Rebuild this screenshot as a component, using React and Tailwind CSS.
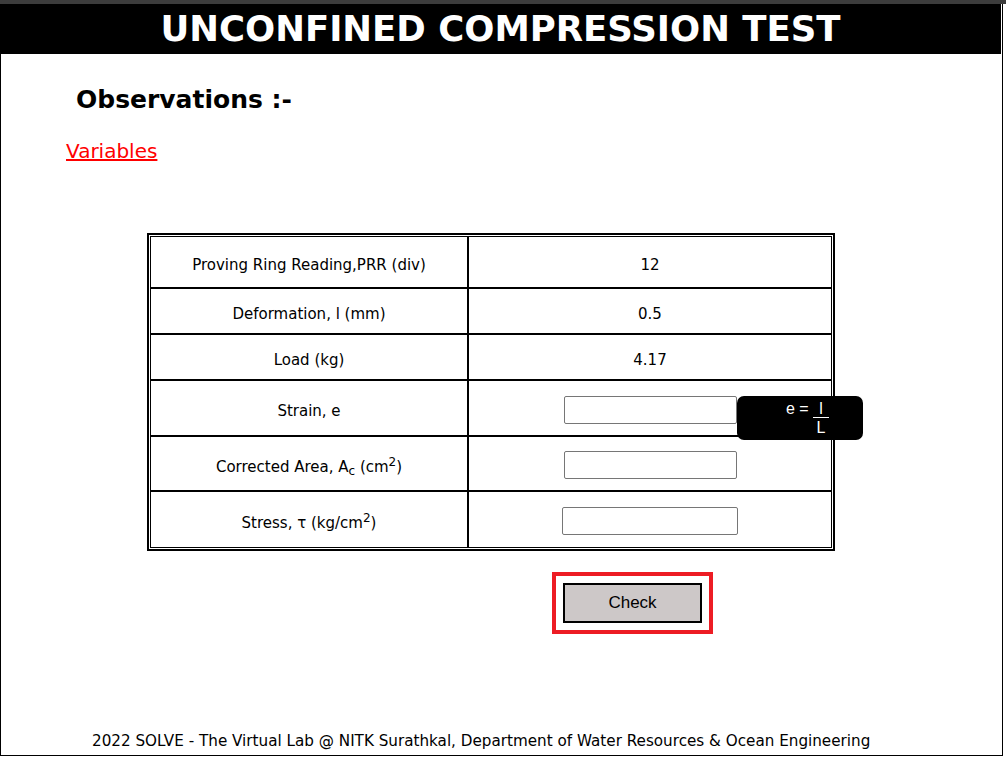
import React from 'react';

const rows = [
    { label: 'Proving Ring Reading,PRR (div)', value: '12', h: 'h-[52px]' },
    { label: 'Deformation, l (mm)', value: '0.5', h: 'h-[46px]' },
    { label: 'Load (kg)', value: '4.17', h: 'h-[46px]' },
];

const Tip = () => (
    <div className="absolute left-[268px] top-[15px] w-[126px] h-[44px] bg-black rounded-[7px] text-white z-10 flex items-start pl-[49px] pt-[3px] text-[16px] leading-[14px]" style={{ fontFamily: '"Liberation Sans", Arial, sans-serif' }}>
        <span className="mt-[3px]">e =&nbsp;</span>
        <span className="flex flex-col items-center">
            <span className="border-b border-white px-[6px] pt-[3px] pb-[1px]">l</span>
            <span className="pt-[3px]">L</span>
        </span>
    </div>
);

const Field = ({ w = 'w-[173px]' }) => (
    <input className={`${w} h-[28px] border border-[#767676] rounded-[2px] bg-white px-1`} />
);

export default function App() {
    return (
        <div className="w-[1006px] h-[762px] bg-white overflow-hidden" style={{ fontFamily: '"DejaVu Sans", Verdana, sans-serif' }}>
            <div className="h-[4px] bg-[#3c3c3c]" />
            <div className="w-[1003px] h-[752px] border-x border-b border-black flex flex-col">
                <div className="h-[50px] bg-black mr-[1px] -ml-[1px] flex items-center justify-center">
                    <h1 className="text-white font-bold text-[35.5px] leading-none">UNCONFINED COMPRESSION TEST</h1>
                </div>

                <h2 className="ml-[75px] mt-[31px] text-[25px] font-bold leading-[30px]">Observations :-</h2>
                <a href="#" className="ml-[65px] mt-[24px] self-start text-[#ff0000] underline text-[20px] leading-[24px]">Variables</a>

                <div className="ml-[146px] mt-[70px] w-[688px] border-2 border-black p-[1px]">
                    <div className="grid grid-cols-[318px_1fr] border border-black text-[15px] text-black">
                        {rows.map((r, i) => (
                            <React.Fragment key={i}>
                                <div className={`${r.h} flex items-center justify-center pt-[7px] border-b-2 border-r-2 border-black`}>{r.label}</div>
                                <div className={`${r.h} flex items-center justify-center pt-[7px] border-b-2 border-black`}>{r.value}</div>
                            </React.Fragment>
                        ))}
                        <div className="h-[56px] flex items-center justify-center pt-[7px] border-b-2 border-r-2 border-black">Strain, e</div>
                        <div className="relative h-[56px] flex items-center justify-center pt-[3px] border-b-2 border-black">
                            <Field />
                            <Tip />
                        </div>
                        <div className="h-[55px] flex items-center justify-center pt-[7px] border-b-2 border-r-2 border-black">
                            <span>Corrected Area, A<sub className="text-[12px]">c</sub> (cm<sup className="text-[12px]">2</sup>)</span>
                        </div>
                        <div className="h-[55px] flex items-center justify-center pt-[3px] border-b-2 border-black">
                            <Field />
                        </div>
                        <div className="h-[55px] flex items-center justify-center pt-[7px] border-r-2 border-black">
                            <span>Stress, τ (kg/cm<sup className="text-[12px]">2</sup>)</span>
                        </div>
                        <div className="h-[55px] flex items-center justify-center pt-[3px]">
                            <Field w="w-[176px]" />
                        </div>
                    </div>
                </div>

                <div className="ml-[551px] mt-[21px] w-[161px] h-[62px] border-[4px] border-[#ed1c24] flex items-center justify-center">
                    <button className="w-[139px] h-[40px] bg-[#cdc8c8] border-2 border-black text-[17px] text-black" style={{ fontFamily: '"Liberation Sans", Arial, sans-serif' }}>Check</button>
                </div>

                <p className="mt-auto mb-[4px] ml-[91px] text-[15.2px] leading-[20px] text-black">2022 SOLVE - The Virtual Lab @ NITK Surathkal, Department of Water Resources &amp; Ocean Engineering</p>
            </div>
        </div>
    );
}
